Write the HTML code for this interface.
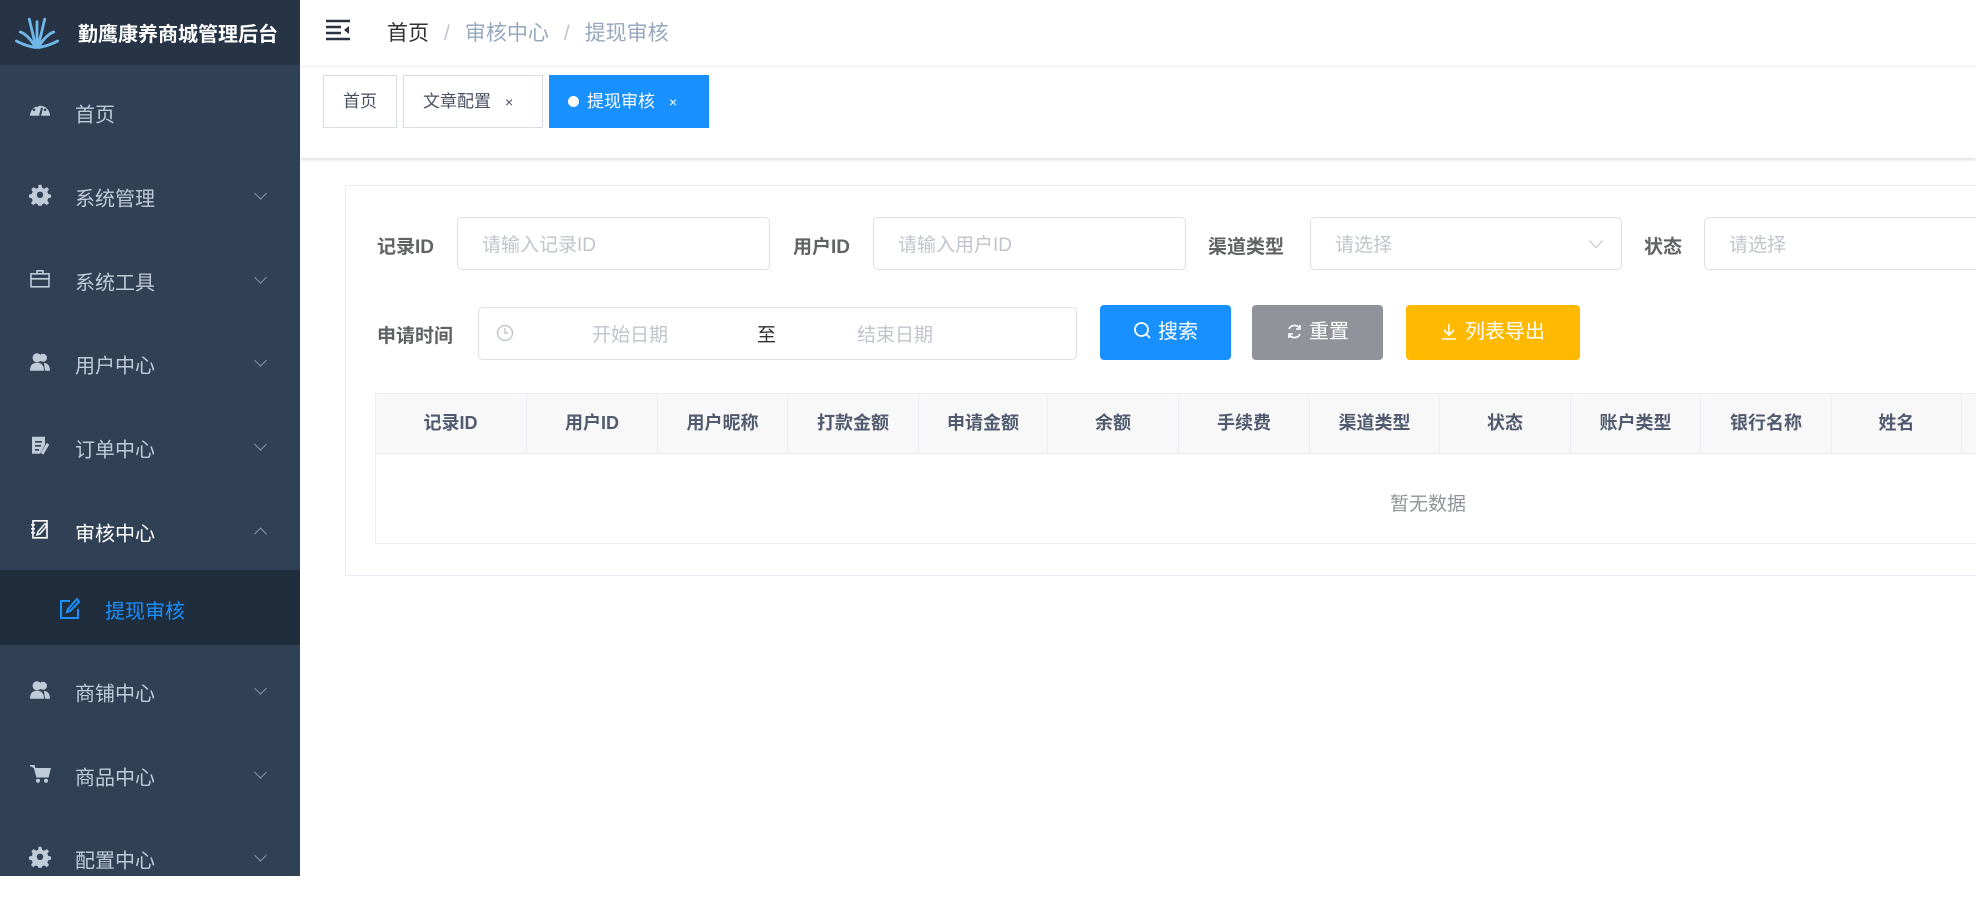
<!DOCTYPE html>
<html><head><meta charset="utf-8"><style>
*{margin:0;padding:0;box-sizing:border-box}
body{width:1976px;height:876px;overflow:hidden;background:#fff;font-family:"Liberation Sans","Noto Sans CJK SC",sans-serif;position:relative}
.a{position:absolute}
#side{left:0;top:0;width:300px;height:876px;background:#304156}
#logo{left:0;top:0;width:300px;height:65px;background:#263445}
.mi{position:absolute;left:0;width:300px;height:84px;color:#bfcbd9;font-size:20px}
.mi .t{position:absolute;left:75px;top:50%;transform:translateY(-50%)}
.mi .ic{position:absolute;left:29px;top:50%;transform:translateY(-60%);width:22px;height:22px}
.mi .ch{position:absolute;left:256px;top:50%;width:9px;height:9px;border-right:1.5px solid #8a96a6;border-bottom:1.5px solid #8a96a6;transform:translateY(-90%) rotate(45deg)}
.lbl{position:absolute;font-size:19px;font-weight:bold;color:#606266}
.inp{position:absolute;border:1px solid #dcdfe6;border-radius:5px;height:53px;color:#c0c4cc;font-size:19px;padding-left:24px;line-height:55px;background:#fff}
.btn{position:absolute;height:55px;border-radius:4px;color:#fff;font-size:20px;text-align:center;line-height:55px}
.th{position:absolute;top:393px;height:61px;line-height:61px;text-align:center;font-size:18px;font-weight:bold;color:#515a6e;border-right:1px solid #ebeef5}
</style></head><body>
<svg width="0" height="0" style="position:absolute"><defs><g id="gear"><path d="M9.5 1h3l.6 3 2.2 1 2.6-1.7 2.1 2.1-1.7 2.6 1 2.2 3 .6v3l-3 .6-1 2.2 1.7 2.6-2.1 2.1-2.6-1.7-2.2 1-.6 3h-3l-.6-3-2.2-1-2.6 1.7-2.1-2.1 1.7-2.6-1-2.2-3-.6v-3l3-.6 1-2.2L2.4 5.4l2.1-2.1 2.6 1.7 2.2-1Z" fill="#bfcbd9"/><circle cx="11" cy="11" r="3.2" fill="#304156"/></g></defs></svg>
<div id="side" class="a">
 <div id="logo" class="a">
  <svg class="a" style="left:14px;top:14px" width="46" height="36" viewBox="0 0 34 28"><g stroke="#6fb7e6" stroke-width="2.2" fill="none" stroke-linecap="round"><path d="M17 26 L17 6"/><path d="M16 26 Q10 16 4 14"/><path d="M18 26 Q24 16 30 14"/><path d="M15 26 Q6 24 1 21"/><path d="M19 26 Q28 24 33 21"/><path d="M16 25 L11 4"/><path d="M18 25 L23 4"/></g></svg>
  <div class="a" style="left:78px;top:18px;color:#fff;font-size:20px;font-weight:bold;white-space:nowrap">勤鹰康养商城管理后台</div>
 </div>
 <div class="mi" style="top:71px"><svg class="ic" viewBox="0 0 22 22"><path d="M1 16 A10 10 0 1 1 21 16 Z" fill="#bfcbd9"/><path d="M11 16 L13 8" stroke="#304156" stroke-width="2"/><circle cx="5" cy="10" r="1.3" fill="#304156"/><circle cx="8" cy="6" r="1.3" fill="#304156"/><circle cx="16" cy="10" r="1.3" fill="#304156"/></svg><span class="t">首页</span></div>
 <div class="mi" style="top:155px"><svg class="ic" viewBox="0 0 22 22"><use href="#gear"/></svg><span class="t">系统管理</span><i class="ch"></i></div>
 <div class="mi" style="top:239px"><svg class="ic" viewBox="0 0 22 22"><rect x="2" y="6" width="18" height="13" fill="none" stroke="#bfcbd9" stroke-width="1.6"/><path d="M8 6V3h6v3M2 11h18" stroke="#bfcbd9" stroke-width="1.6" fill="none"/></svg><span class="t">系统工具</span><i class="ch"></i></div>
 <div class="mi" style="top:322px"><svg class="ic" viewBox="0 0 22 22"><circle cx="8" cy="7" r="4.5" fill="#bfcbd9"/><path d="M1 20 Q1 12 8 12 Q15 12 15 20Z" fill="#bfcbd9"/><circle cx="14" cy="7" r="4" fill="#bfcbd9"/><path d="M15 12 Q21 13 21 20h-5" fill="#bfcbd9"/></svg><span class="t">用户中心</span><i class="ch"></i></div>
 <div class="mi" style="top:406px"><svg class="ic" viewBox="0 0 22 22"><path d="M3 2h13v8l-5 9H3Z" fill="#bfcbd9"/><path d="M6 7h7M6 11h6M6 15h4" stroke="#304156" stroke-width="1.6"/><path d="M19 9 L13 19" stroke="#bfcbd9" stroke-width="3"/></svg><span class="t">订单中心</span><i class="ch"></i></div>
 <div class="mi" style="top:490px;color:#fff"><svg class="ic" viewBox="0 0 22 22"><path d="M4 2h14v17H4Z" fill="none" stroke="#fff" stroke-width="1.6"/><path d="M16 5 L9 13 L8 16 L11 15 L18 7Z" fill="none" stroke="#fff" stroke-width="1.5"/><path d="M2 6h4M2 10h4M2 14h4" stroke="#fff" stroke-width="1.4"/></svg><span class="t">审核中心</span><i class="ch" style="transform:translateY(-30%) rotate(225deg)"></i></div>
 <div class="a" style="left:0;top:570px;width:300px;height:75px;background:#1f2d3d"><svg class="a" style="left:59px;top:28px" width="22" height="22" viewBox="0 0 22 22"><path d="M11 3H2v17h17v-9" fill="none" stroke="#1890ff" stroke-width="2"/><path d="M18 1 L9 11 L8 14 L11 13 L20 4Z" fill="none" stroke="#1890ff" stroke-width="2"/></svg><span class="a" style="left:105px;top:25px;color:#1890ff;font-size:20px">提现审核</span></div>
 <div class="mi" style="top:650px"><svg class="ic" viewBox="0 0 22 22"><circle cx="8" cy="7" r="4.5" fill="#bfcbd9"/><path d="M1 20 Q1 12 8 12 Q15 12 15 20Z" fill="#bfcbd9"/><circle cx="14" cy="7" r="4" fill="#bfcbd9"/><path d="M15 12 Q21 13 21 20h-5" fill="#bfcbd9"/></svg><span class="t">商铺中心</span><i class="ch"></i></div>
 <div class="mi" style="top:734px"><svg class="ic" viewBox="0 0 22 22"><path d="M1 3h4l3 11h11l2-8H6" fill="#bfcbd9" stroke="#bfcbd9" stroke-width="1.5"/><circle cx="9" cy="18" r="2" fill="#bfcbd9"/><circle cx="17" cy="18" r="2" fill="#bfcbd9"/></svg><span class="t">商品中心</span><i class="ch"></i></div>
 <div class="mi" style="top:817px"><svg class="ic" viewBox="0 0 22 22"><use href="#gear"/></svg><span class="t">配置中心</span><i class="ch"></i></div>
</div>

<!-- navbar -->
<svg class="a" style="left:325px;top:19px" width="26" height="22" viewBox="0 0 26 22"><path d="M1 2h24M1 8h15M1 14h15M1 20h24" stroke="#2c3340" stroke-width="2.4"/><path d="M24 7 L19 11 L24 15Z" fill="#2c3340"/></svg>
<div class="a" style="left:387px;top:17px;font-size:21px;color:#303133;white-space:nowrap">首页<span style="color:#c0c4cc;margin:0 15px">/</span><span style="color:#97a8be">审核中心</span><span style="color:#c0c4cc;margin:0 15px">/</span><span style="color:#97a8be">提现审核</span></div>
<!-- tags bar -->
<div class="a" style="left:300px;top:65px;width:1676px;height:93px;background:#fff;border-top:3px solid #f5f6f8;box-shadow:0 2px 3px rgba(0,0,0,.12)"></div>
<div class="a" style="left:323px;top:75px;width:74px;height:53px;border:1px solid #d8dce5;font-size:17px;color:#495060;text-align:center;line-height:51px">首页</div>
<div class="a" style="left:403px;top:75px;width:140px;height:53px;border:1px solid #d8dce5;font-size:17px;color:#495060;line-height:51px;padding-left:19px">文章配置<span style="font-size:14px;margin-left:14px">×</span></div>
<div class="a" style="left:549px;top:75px;width:160px;height:53px;background:#1890ff;font-size:17px;color:#fff;line-height:53px;padding-left:19px"><span style="display:inline-block;width:11px;height:11px;border-radius:50%;background:#fff;margin-right:8px"></span>提现审核<span style="font-size:14px;margin-left:14px">×</span></div>

<!-- card -->
<div class="a" style="left:345px;top:185px;width:1640px;height:391px;border:1px solid #e6ebf5"></div>
<div class="lbl" style="left:377px;top:232px">记录ID</div>
<div class="inp" style="left:457px;top:217px;width:313px">请输入记录ID</div>
<div class="lbl" style="left:793px;top:232px">用户ID</div>
<div class="inp" style="left:873px;top:217px;width:313px">请输入用户ID</div>
<div class="lbl" style="left:1208px;top:232px">渠道类型</div>
<div class="inp" style="left:1310px;top:217px;width:312px">请选择<i class="a" style="right:20px;top:18px;width:10px;height:10px;border-right:1.5px solid #c0c4cc;border-bottom:1.5px solid #c0c4cc;transform:rotate(45deg)"></i></div>
<div class="lbl" style="left:1644px;top:232px">状态</div>
<div class="inp" style="left:1704px;top:217px;width:300px">请选择</div>

<div class="lbl" style="left:377px;top:321px">申请时间</div>
<div class="inp" style="left:478px;top:307px;width:599px;padding-left:0">
 <svg class="a" style="left:17px;top:16px" width="18" height="18" viewBox="0 0 18 18"><circle cx="9" cy="9" r="7.5" fill="none" stroke="#c0c4cc" stroke-width="1.4"/><path d="M9 4v5h3" fill="none" stroke="#c0c4cc" stroke-width="1.4"/></svg>
 <span class="a" style="left:113px">开始日期</span><span class="a" style="left:278px;color:#303133">至</span><span class="a" style="left:378px">结束日期</span>
</div>
<div class="btn" style="left:1100px;top:305px;width:131px;background:#1890ff"><svg style="vertical-align:-2px;margin-right:6px" width="19" height="19" viewBox="0 0 19 19"><circle cx="8.5" cy="8.5" r="6.5" fill="none" stroke="#fff" stroke-width="1.8"/><path d="M13 13l4 4" stroke="#fff" stroke-width="1.8"/></svg>搜索</div>
<div class="btn" style="left:1252px;top:305px;width:131px;background:#909399"><svg style="vertical-align:-2px;margin-right:6px" width="17" height="17" viewBox="0 0 17 17"><path d="M14 6A6 6 0 0 0 3 6M3 11a6 6 0 0 0 11 0" fill="none" stroke="#fff" stroke-width="1.6"/><path d="M14 2v4h-4M3 15v-4h4" fill="none" stroke="#fff" stroke-width="1.6"/></svg>重置</div>
<div class="btn" style="left:1406px;top:305px;width:174px;background:#ffba00"><svg style="vertical-align:-2px;margin-right:8px" width="16" height="17" viewBox="0 0 16 17"><path d="M8 1v11M3 7l5 5 5-5M1 16h14" fill="none" stroke="#fff" stroke-width="1.6"/></svg>列表导出</div>

<!-- table -->
<div class="a" style="left:375px;top:393px;width:1601px;height:151px;border:1px solid #ebeef5;border-right:none"></div>
<div class="a" style="left:376px;top:394px;width:1600px;height:60px;background:#f8f8f9;border-bottom:1px solid #e8eaec"></div>
<div class="th" style="left:375px;width:152px">记录ID</div>
<div class="th" style="left:527px;width:131px">用户ID</div>
<div class="th" style="left:658px;width:130px">用户昵称</div>
<div class="th" style="left:788px;width:131px">打款金额</div>
<div class="th" style="left:919px;width:129px">申请金额</div>
<div class="th" style="left:1048px;width:131px">余额</div>
<div class="th" style="left:1179px;width:131px">手续费</div>
<div class="th" style="left:1310px;width:130px">渠道类型</div>
<div class="th" style="left:1440px;width:131px">状态</div>
<div class="th" style="left:1571px;width:130px">账户类型</div>
<div class="th" style="left:1701px;width:131px">银行名称</div>
<div class="th" style="left:1832px;width:130px">姓名</div>
<div class="a" style="left:1390px;top:489px;font-size:19px;color:#909399">暂无数据</div>
</body></html>
